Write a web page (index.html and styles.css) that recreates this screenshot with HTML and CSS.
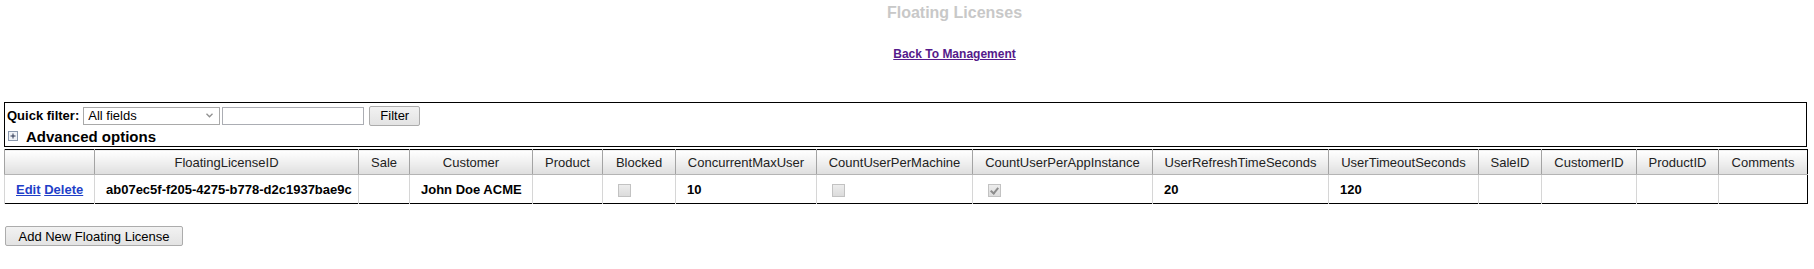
FILE: index.html
```html
<!DOCTYPE html>
<html lang="en">
<head>
    <meta charset="UTF-8">
    <meta name="viewport" content="width=device-width, initial-scale=1.0">
    <title>Floating Licenses</title>
    <link rel="stylesheet" href="styles.css">
</head>
<body>
    <div class="page-head">
        <h1 class="title">Floating Licenses</h1>
        <a class="back-link" href="#">Back To Management</a>
    </div>

    <div class="filter-box">
        <div class="quick-filter">
            <label for="filterField">Quick filter:</label>
            <select id="filterField">
                <option>All fields</option>
            </select>
            <input type="text" id="filterText">
            <button class="btn">Filter</button>
        </div>
        <div class="advanced">
            <svg class="expand-icon" width="10" height="10" viewBox="0 0 10 10">
                <rect x="0.5" y="0.5" width="9" height="9" fill="#eef1f6" stroke="#8a98ad"/>
                <path d="M2.5 5h5M5 2.5v5" stroke="#2b3550" stroke-width="1"/>
            </svg>
            <span>Advanced options</span>
        </div>
    </div>

    <table class="grid">
        <colgroup>
            <col style="width:90px">
            <col style="width:264px">
            <col style="width:51px">
            <col style="width:123px">
            <col style="width:70px">
            <col style="width:73px">
            <col style="width:141px">
            <col style="width:156px">
            <col style="width:180px">
            <col style="width:176px">
            <col style="width:150px">
            <col style="width:63px">
            <col style="width:95px">
            <col style="width:82px">
            <col style="width:89px">
        </colgroup>
        <thead>
            <tr>
                <th></th>
                <th>FloatingLicenseID</th>
                <th>Sale</th>
                <th>Customer</th>
                <th>Product</th>
                <th>Blocked</th>
                <th>ConcurrentMaxUser</th>
                <th>CountUserPerMachine</th>
                <th>CountUserPerAppInstance</th>
                <th>UserRefreshTimeSeconds</th>
                <th>UserTimeoutSeconds</th>
                <th>SaleID</th>
                <th>CustomerID</th>
                <th>ProductID</th>
                <th>Comments</th>
            </tr>
        </thead>
        <tbody>
            <tr>
                <td class="actions"><a href="#">Edit</a> <a href="#">Delete</a></td>
                <td>ab07ec5f-f205-4275-b778-d2c1937bae9c</td>
                <td></td>
                <td>John Doe ACME</td>
                <td></td>
                <td><input type="checkbox" class="check" disabled></td>
                <td>10</td>
                <td><input type="checkbox" class="check" disabled></td>
                <td><input type="checkbox" class="check" checked disabled></td>
                <td>20</td>
                <td>120</td>
                <td></td>
                <td></td>
                <td></td>
                <td></td>
            </tr>
        </tbody>
    </table>

    <button class="btn add-button">Add New Floating License</button>
</body>
</html>
```

FILE: styles.css
```css
body {
    font-family: "Liberation Sans", Arial, sans-serif;
    font-size: 13px;
    color: #000;
    background-color: #ffffff;
    margin: 0;
    padding: 0 7px 0 4px;
}
.page-head {
    padding-left: 98px;
    text-align: center;
}
.title {
    margin: 3px 0 0 0;
    font-size: 16px;
    line-height: 19px;
    font-weight: bold;
    color: #c8c8c8;
}
.back-link {
    display: inline-block;
    margin-top: 25px;
    font-size: 12px;
    line-height: 14px;
    font-weight: bold;
    color: #551a8b;
}
.filter-box {
    margin-top: 41px;
    padding-top: 2px;
    border: 1px solid #000;
}
.quick-filter {
    display: flex;
    align-items: center;
    height: 21px;
    padding-left: 2px;
}
.quick-filter label {
    font-weight: bold;
    margin-right: 4px;
}
.quick-filter select {
    appearance: none;
    -webkit-appearance: none;
    width: 137px;
    height: 18px;
    margin: 0 2px 0 0;
    padding: 0 0 0 4px;
    border: 1px solid #a9a9a9;
    border-radius: 0;
    font-family: inherit;
    font-size: 13px;
    color: #000;
    background: #fff url("data:image/svg+xml;utf8,<svg xmlns='http://www.w3.org/2000/svg' width='7' height='5'><path d='M0.5 0.8l3 3 3-3' fill='none' stroke='%23909090' stroke-width='1.3'/></svg>") no-repeat right 6px center;
}
.quick-filter input[type="text"] {
    width: 142px;
    height: 18px;
    margin: 0 5px 0 0;
    padding: 0 3px;
    border: 1px solid #abadb3;
    box-sizing: border-box;
    font-family: inherit;
    font-size: 13px;
}
.btn {
    font-family: inherit;
    font-size: 13px;
    color: #000;
    border: 1px solid #acacac;
    border-radius: 2px;
    background: linear-gradient(#f2f2f2, #e3e3e3);
    box-sizing: border-box;
    cursor: pointer;
}
.quick-filter .btn {
    width: 51px;
    height: 20px;
    padding: 0;
}
.advanced {
    display: flex;
    align-items: center;
    height: 20px;
    padding-left: 3px;
    font-size: 15px;
    font-weight: bold;
}
.expand-icon {
    margin-right: 8px;
}
.grid {
    margin-top: 2px;
    width: 1803px;
    table-layout: fixed;
    border-collapse: collapse;
    border: 1px solid #000;
}
.grid th {
    height: 24px;
    padding: 0;
    font-weight: normal;
    color: #222;
    text-align: center;
    white-space: nowrap;
    background: linear-gradient(#ffffff, #f3f3f3 40%, #dedede);
    border-left: 1px solid #a3a3a3;
    border-bottom: 1px solid #b4b4b4;
}
.grid td {
    height: 28px;
    padding: 0 0 0 11px;
    font-weight: bold;
    white-space: nowrap;
    border-left: 1px solid #d6d6d6;
}
.actions a {
    color: #1f3fc8;
}
.check {
    appearance: none;
    -webkit-appearance: none;
    position: relative;
    width: 13px;
    height: 13px;
    margin: 0 0 0 4px;
    vertical-align: middle;
    border: 1px solid #c2c2c2;
    background: linear-gradient(#ececec, #dcdcdc);
    box-sizing: border-box;
}
.check:checked::after {
    content: "";
    position: absolute;
    left: 3px;
    top: 1px;
    width: 3px;
    height: 6px;
    border: solid #8c8c8c;
    border-width: 0 2px 2px 0;
    transform: rotate(40deg);
}
.add-button {
    display: block;
    margin: 22px 0 0 1px;
    width: 178px;
    height: 20px;
    padding: 0;
}
```
